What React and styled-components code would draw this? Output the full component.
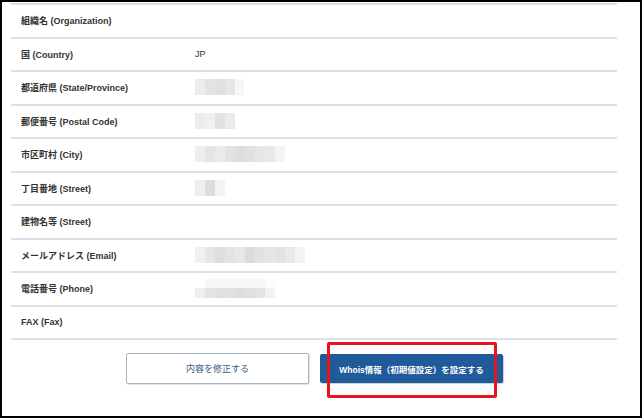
import React from 'react'
import styled, { createGlobalStyle } from 'styled-components'

const rows = [
    { label: '組織名 (Organization)' },
    { label: '国 (Country)', value: 'JP' },
    { label: '都道府県 (State/Province)', blur: [[[10, '#ededed'], [10, '#e3e3e3'], [10, '#e0e0e0'], [10, '#e6e6e6'], [9, '#f6f6f6']]] },
    { label: '郵便番号 (Postal Code)', blur: [[[10, '#ececec'], [10, '#f0f0f0'], [10, '#e2e2e2'], [10, '#ebebeb']]] },
    { label: '市区町村 (City)', blur: [[[10, '#ededed'], [10, '#e4e4e4'], [10, '#eaeaea'], [10, '#e2e2e2'], [10, '#dedede'], [10, '#e1e1e1'], [10, '#e6e6e6'], [10, '#e9e9e9'], [10, '#f4f4f4']]] },
    { label: '丁目番地 (Street)', blur: [[[10, '#eeeeee'], [10, '#dcdcdc'], [10, '#f3f3f3']]] },
    { label: '建物名等 (Street)' },
    { label: 'メールアドレス (Email)', blur: [[[10, '#f0f0f0'], [10, '#e5e5e5'], [10, '#dedede'], [10, '#e3e3e3'], [10, '#e8e8e8'], [10, '#dcdcdc'], [10, '#e2e2e2'], [10, '#e6e6e6'], [10, '#e3e3e3'], [10, '#e9e9e9'], [10, '#f3f3f3']]] },
    { label: '電話番号 (Phone)', blur: [
        [[10, '#ffffff'], [60, '#f6f6f6'], [10, '#fbfbfb']],
        [[10, '#eeeeee'], [10, '#e4e4e4'], [10, '#e0e0e0'], [10, '#e2e2e2'], [10, '#dedede'], [10, '#e0e0e0'], [10, '#e3e3e3'], [10, '#f2f2f2']],
    ] },
    { label: 'FAX (Fax)' },
]

const App = () => {
    return (
        <>
            <GlobalStyle />
            <Frame>
                <Table>
                    {rows.map((r) => (
                        <Row key={r.label}>
                            <Label>{r.label}</Label>
                            <Value>
                                {r.value}
                                {r.blur && (
                                    <Mosaic>
                                        {r.blur.map((line, i) => (
                                            <MosaicLine key={i} $h={r.blur.length > 1 ? (i ? 10 : 9) : 16}>
                                                {line.map(([w, c], j) => (
                                                    <Cell key={j} $w={w} $c={c} />
                                                ))}
                                            </MosaicLine>
                                        ))}
                                    </Mosaic>
                                )}
                            </Value>
                        </Row>
                    ))}
                </Table>
                <Actions>
                    <EditButton>内容を修正する</EditButton>
                    <SubmitWrap>
                        <SubmitButton>Whois情報（初期値設定）を設定する</SubmitButton>
                        <Highlight />
                    </SubmitWrap>
                </Actions>
            </Frame>
        </>
    )
}

const GlobalStyle = createGlobalStyle`
    body{
        margin:0;
        background:#fff;
        font-family:"Liberation Sans","Noto Sans CJK JP",sans-serif;
    }
`;
const Frame = styled.div`
    box-sizing:border-box;
    width:642px;
    height:418px;
    border:2px solid #000;
    background:#fff;
    padding:1px 23px 0 9px;
    overflow:hidden;
`;
const Table = styled.div`
    border-top:2px solid #dbe1ea;
`;
const Row = styled.div`
    display:flex;
    align-items:center;
    height:33.5px;
    box-sizing:border-box;
    border-bottom:2px solid #dbe1ea;
`;
const Label = styled.div`
    width:174px;
    padding-left:10px;
    font-size:9px;
    font-weight:bold;
    color:#333;
`;
const Value = styled.div`
    font-size:9px;
    color:#333;
    display:flex;
    align-items:center;
`;
const Mosaic = styled.div`
    display:flex;
    flex-direction:column;
    margin-top:-1px;
`;
const MosaicLine = styled.div`
    display:flex;
    height:${p => p.$h}px;
`;
const Cell = styled.div`
    width:${p => p.$w}px;
    background:${p => p.$c};
`;
const Actions = styled.div`
    display:flex;
    justify-content:center;
    gap:11px;
    padding-top:13px;
    padding-left:1px;
`;
const EditButton = styled.button`
    width:183px;
    height:31px;
    background:#fff;
    border:1px solid #a6b4c6;
    border-radius:2px;
    box-shadow:1px 1px 1px rgba(0,0,0,0.12);
    color:#3d5c84;
    font-family:inherit;
    font-size:9px;
`;
const SubmitWrap = styled.div`
    position:relative;
    padding-top:1px;
`;
const SubmitButton = styled.button`
    width:183px;
    height:29px;
    background:#1f5b9b;
    border:none;
    border-radius:2px;
    box-shadow:1px 1px 1px rgba(0,0,0,0.2);
    color:#fff;
    font-family:inherit;
    font-weight:bold;
    font-size:8.5px;
`;
const Highlight = styled.div`
    position:absolute;
    left:7px;
    top:-11px;
    width:170px;
    height:56px;
    box-sizing:border-box;
    border:3px solid #e8141b;
    border-radius:2px;
`;

export default App
